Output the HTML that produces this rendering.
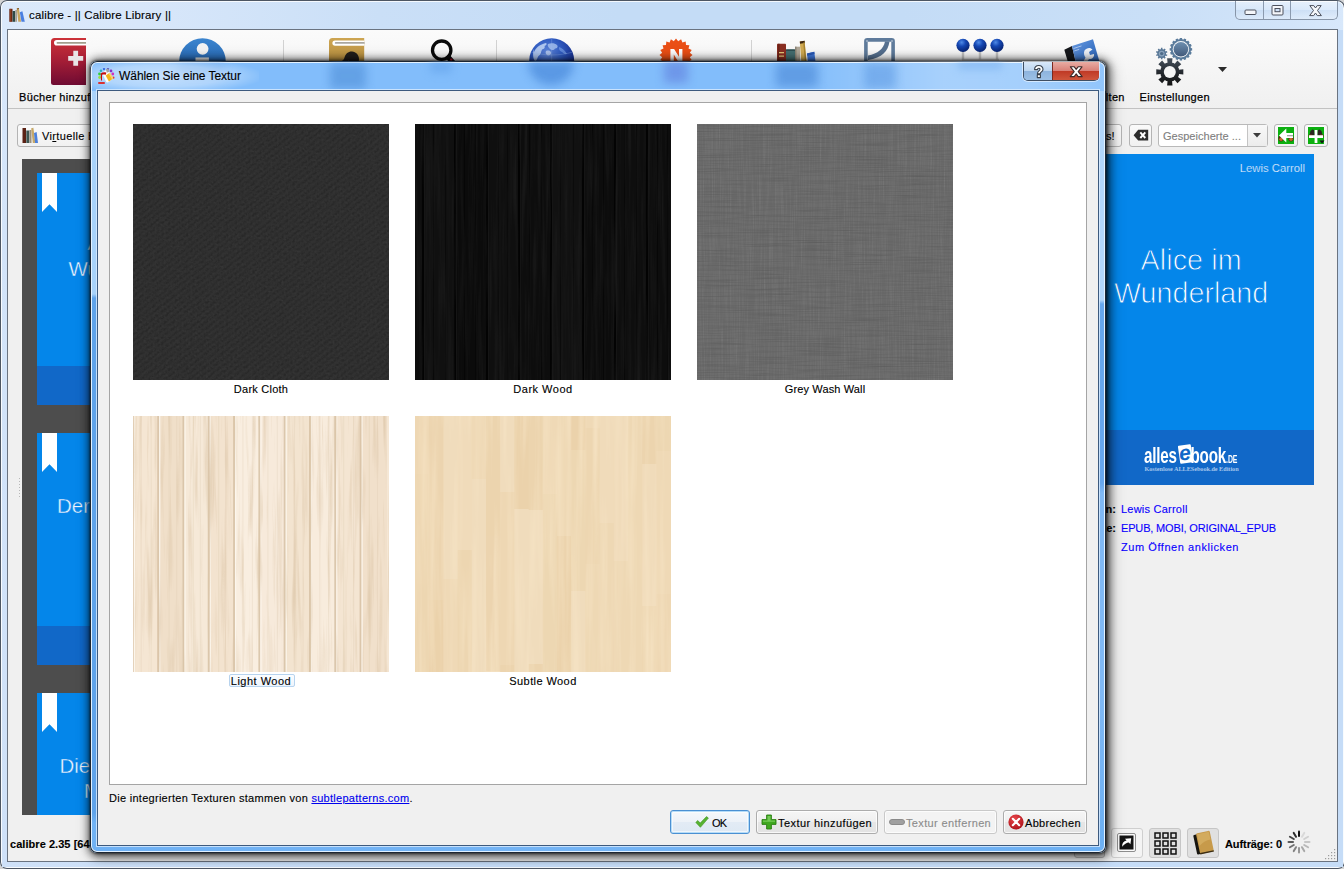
<!DOCTYPE html>
<html lang="de">
<head>
<meta charset="utf-8">
<title>calibre - Wählen Sie eine Textur</title>
<style>
*{box-sizing:border-box;margin:0;padding:0}
html,body{width:1344px;height:869px;overflow:hidden;background:#d4d4d4}
body{font-family:"Liberation Sans",sans-serif;font-size:11px;color:#000;position:relative}
.abs{position:absolute}
.t{position:absolute;white-space:nowrap;line-height:14px;-webkit-text-stroke-width:.12px}
.lbl,.dbtn span{-webkit-text-stroke-width:.12px}

/* ---------- main window ---------- */
#mw{position:absolute;left:0;top:0;width:1345px;height:869px;border-radius:7px 8px 7px 7px;
 background:linear-gradient(90deg,#dbe9fb 0,#d8e7fa 140px,#cadff7 380px,#c4dcf6 620px,#c4dcf6 900px,#c9dff7 1150px,#d2e4f9 1290px,#d8e8fb 1344px);
 box-shadow:inset 0 0 0 1px #4d5663, inset 0 0 0 2px rgba(255,255,255,.8)}
#mw-client{position:absolute;left:8px;top:30px;width:1329px;height:831px;background:#f0f0f0;
 box-shadow:0 0 0 1px #6a7380}
#mw-title{left:29px;top:8px;font-size:11.500px;letter-spacing:.16px}
#capbtn{position:absolute;left:1235px;top:1px;width:103px;height:19px;border:1px solid #8795a8;border-top:none;
 border-radius:0 0 5px 5px;background:linear-gradient(180deg,rgba(255,255,255,.45),rgba(255,255,255,.15) 50%,rgba(190,210,235,.3) 51%,rgba(255,255,255,.25));}
#capbtn i{position:absolute;top:0;width:1px;height:18px;background:#8b9aae}

#tb{position:absolute;left:0;top:0;width:1329px;height:78px;background:linear-gradient(180deg,#fbfbfb,#f3f3f3 70%,#f0f0f0)}
#tb-line{position:absolute;left:0;top:78px;width:1329px;height:1px;background:#c2c2c2}
.tbl{position:absolute;top:60px;font-size:11px;letter-spacing:.34px;line-height:14px;white-space:nowrap;color:#000}
.sep{position:absolute;top:10px;width:1px;height:60px;background:#d2d2d2}

.btn{position:absolute;border:1px solid #b4b4b4;border-radius:3px;background:linear-gradient(180deg,#f6f6f6,#ececec 50%,#e2e2e2 51%,#dedede)}
.btn.flat{background:linear-gradient(180deg,#fafafa,#f1f1f1)}

/* ---------- dialog ---------- */
#dlg-shadow{position:absolute;left:90px;top:61px;width:1016px;height:792px;border-radius:7px;
 box-shadow:0 0 2px 0 rgba(0,0,0,.55),0 0 9px 2px rgba(0,0,0,.33),1px 0 3px 1px rgba(0,0,0,.4),2px 2px 9px 2px rgba(0,0,0,.4),3px 2px 15px 3px rgba(0,0,0,.2)}
#dlg{position:absolute;left:90px;top:61px;width:1016px;height:792px;border-radius:7px;overflow:hidden;
 background:linear-gradient(180deg,#82bdfb 0,#82bdfb 560px,#6fb1f4 760px);
 box-shadow:inset 0 0 0 1px #1c2633, inset 0 0 0 2px rgba(236,246,255,.92)}
#dlg-client{position:absolute;left:8px;top:30px;width:1000px;height:754px;background:#f0f0f0;box-shadow:0 0 0 1px #3d5a7e, 0 0 0 2px rgba(214,234,254,.85)}
#list{position:absolute;left:11px;top:11px;width:978px;height:683px;background:#fff;border:1px solid #a5a5a5}
.th{position:absolute;width:256px;height:256px}
.lbl{position:absolute;width:256px;text-align:center;font-size:11px;line-height:14px;white-space:nowrap}
.dbtn{position:absolute;top:719px;height:24px;border:1px solid #acacac;border-radius:3px;
 background:linear-gradient(180deg,#f6f6f6,#efefef 48%,#e6e6e6 52%,#e3e3e3);box-shadow:inset 0 0 0 1px rgba(255,255,255,.75)}
.dbtn span{position:absolute;top:5px;font-size:11px;line-height:14px;white-space:nowrap}

.cv{position:absolute;left:15px;width:190px;height:232px;background:#0486ea}
.cv b{position:absolute;left:0;bottom:0;width:100%;height:39px;background:#1168c8}
.cv s{position:absolute;left:5px;top:0;width:15px;height:39px;background:#fff;clip-path:polygon(0 0,100% 0,100% 100%,50% 80%,0 100%)}
.cvt{color:#f2f8fe;font-size:20.500px;line-height:24px}
#dcap{left:933px;top:1px;width:76px;height:19px;border:1px solid #3f4f64;border-top:none;border-radius:0 0 5px 5px;box-shadow:0 0 0 1px rgba(255,255,255,.55)}
.thin{-webkit-text-stroke:.9px #0486ea}
.cvt{-webkit-text-stroke:.4px #0486ea}
.tbl,.semi{-webkit-text-stroke:.25px #000}
</style>
</head>
<body>

<!-- ================= MAIN WINDOW ================= -->
<div id="mw">
  <div class="t" id="mw-title">calibre - || Calibre Library ||</div>
  <svg class="abs" style="left:9px;top:7px" width="16" height="16" viewBox="0 0 16 16">
    <rect x=".3" y="1.800" width="3.200" height="13" fill="#6b2410"/><rect x="1.200" y="1.800" width="1" height="13" fill="#a5522a" opacity=".7"/>
    <rect x="3.600" y="4" width="2.600" height="10.800" fill="#2f4a47"/>
    <rect x="6.300" y="3" width="1.700" height="11.800" fill="#a8a093"/>
    <path d="M7.800 1.500l2-.6 2.300 13.900H9.300z" fill="#c9a55c"/><path d="M7.800 1.500l2-.6.2 1.200-2 .5z" fill="#7a4a1c"/>
    <path d="M10.800 5.200l2.600-.9 2.400 10.500h-3.300z" fill="#4a7fe0"/>
  </svg>
  <div id="capbtn"><i style="left:27px"></i><i style="left:54px"></i>
    <svg class="abs" style="left:0;top:0" width="102" height="19" viewBox="0 0 102 19">
      <rect x="9" y="9" width="11" height="4.500" rx="1" fill="#f4f6fa" stroke="#4c505c" stroke-width="1"/>
      <rect x="36" y="4.500" width="11" height="9.500" rx="1" fill="#f4f6fa" stroke="#4c505c" stroke-width="1"/>
      <rect x="39" y="7.500" width="5" height="3.200" fill="#cfe0f6" stroke="#4c505c" stroke-width="1"/>
      <path d="M73.800 4.600h4l1.700 2.400 1.700-2.400h4l-3.700 4.900 3.900 5.100h-4.100l-1.800-2.600-1.800 2.600h-4.100l3.900-5.100z" fill="#f6f8fb" stroke="#4c505c" stroke-width="1" stroke-linejoin="round"/>
    </svg>
  </div>

  <div class="abs" style="left:2px;top:30px;width:5px;height:832px;background:linear-gradient(180deg,#d9e8fb,#d3e4f9 200px,#cfe1f8)"></div>
  <div class="abs" style="left:1338px;top:30px;width:5px;height:832px;background:#c5dcf7"></div>
  <div class="abs" style="left:2px;top:862px;width:1341px;height:5px;background:linear-gradient(90deg,#cfe1f8,#c6ddf8 30%,#c6ddf8)"></div>
  <div id="mw-client">

    <div id="tb"></div>
    <div id="tb-line"></div>

    <!-- toolbar icons (coords relative to client: page x-8, y-30) -->
    <!-- 1 red book (cut at page x=86) -->
    <svg class="abs" style="left:43px;top:8px" width="35" height="48" viewBox="0 0 35 48">
      <defs><linearGradient id="gR" x1="0" y1="0" x2="0" y2="1"><stop offset="0" stop-color="#cc3238"/><stop offset=".45" stop-color="#a81f36"/><stop offset="1" stop-color="#6f0b33"/></linearGradient></defs>
      <path d="M3.5 0H35V47H2.5A2.5 2.5 0 0 1 0 44.5V3.5A3.5 3.5 0 0 1 3.5 0Z" fill="url(#gR)"/>
      <path d="M5.8 2H35V7.6H5.8A2.8 2.8 0 0 1 5.8 2Z" fill="#fff"/>
      <rect x="5.6" y="3.9" width="30" height="1.9" rx=".9" fill="#a39e8d"/>
      <path d="M22.3 12.8h4.8v5.1h5.1v4.8h-5.1v5.1h-4.8v-5.1h-5.1v-4.8h5.1z" fill="#e9e4e6"/>
    </svg>
    <div class="tbl" style="left:11px;top:60px">Bücher hinzufügen</div>

    <!-- 2 info circle -->
    <svg class="abs" style="left:171px;top:8px" width="47" height="47" viewBox="0 0 47 47">
      <defs><linearGradient id="gI" x1="0" y1="0" x2="0" y2="1"><stop offset="0" stop-color="#3b85cf"/><stop offset="1" stop-color="#164f9c"/></linearGradient></defs>
      <circle cx="23.5" cy="23.5" r="23.3" fill="url(#gI)"/>
      <circle cx="23.6" cy="10.8" r="5.9" fill="#f3f3f3"/>
      <path d="M16.5 19.6h13.4v18h3.2v3.6H14.2v-3.6h3.4v-14.4h-1.1z" fill="#ededed"/>
    </svg>

    <div class="sep" style="left:275px"></div>

    <!-- 3 brown book -->
    <svg class="abs" style="left:321px;top:8px" width="36" height="48" viewBox="0 0 36 48">
      <defs><linearGradient id="gB" x1="0" y1="0" x2="0" y2="1"><stop offset="0" stop-color="#cda552"/><stop offset="1" stop-color="#a47a2c"/></linearGradient></defs>
      <path d="M3.500 0H35.200V47H2.500A2.500 2.500 0 0 1 0 44.500V3.500A3.500 3.500 0 0 1 3.500 0Z" fill="url(#gB)"/>
      <path d="M6 2.500H35.200V7.700H6A2.600 2.600 0 0 1 6 2.500Z" fill="#fff"/>
      <rect x="5.800" y="4" width="30" height="1.800" rx=".9" fill="#aaa79f"/>
      <path d="M12.500 23c1.500-.5 2.500-1.500 3-3.500 1-4 4-6.200 7.500-6 4 .3 7 3.500 7 7.500 0 2-.6 3.500-1.500 5H17c2-.8 3-2.200 2.600-3.500-1.500 1.300-4.500 1.500-7.100.5z" fill="#231f1b"/>
    </svg>

    <!-- 4 magnifier -->
    <svg class="abs" style="left:420px;top:8px" width="40" height="48" viewBox="0 0 40 48">
      <circle cx="13.700" cy="12.200" r="9.200" fill="none" stroke="#0b0b0b" stroke-width="3.300"/>
      <path d="M20.500 19.500l8 9" stroke="#0b0b0b" stroke-width="5" stroke-linecap="round"/>
      <circle cx="23.200" cy="21.600" r="1.200" fill="#c4122a"/>
    </svg>

    <div class="sep" style="left:488px"></div>

    <!-- 5 globe -->
    <svg class="abs" style="left:521px;top:8px" width="46" height="46" viewBox="0 0 46 46">
      <defs><radialGradient id="gG" cx=".4" cy=".32" r=".72"><stop offset="0" stop-color="#5f86d8"/><stop offset=".45" stop-color="#2f5ac0"/><stop offset=".8" stop-color="#1b3596"/><stop offset="1" stop-color="#101f66"/></radialGradient>
      <clipPath id="cG"><circle cx="22.700" cy="22.700" r="22"/></clipPath></defs>
      <circle cx="22.700" cy="22.700" r="22.500" fill="url(#gG)"/>
      <g clip-path="url(#cG)">
        <path d="M5 14c2-5 7-8 12-9 1.500 1 0 2.500-1.500 3 1 1.500-.5 3-2.500 3.500-1 2.500-1 5-3.500 6.500-1.500 2-1.500 5-3.500 5-2-2-2.500-8-1-12z" fill="#c9dcf7" opacity=".8"/>
        <path d="M19 6c3-1.500 7-1 9 1 1.500 2 0 3.500-2 3.500-1 2-3.500 2-5 .5-1.500-1.500-3-3.500-2-5z" fill="#b7cff3" opacity=".7"/>
        <path d="M17 13c2-1 4.500-.5 5 1.500.5 2-1.500 3-3 3-2-.5-3-3-2-4.500z" fill="#d5e4fa" opacity=".65"/>
        <path d="M30 9c3 1 6 3.500 8 7-2 .5-3.500-.5-5-2-2-.5-3.500-2.500-3-5z" fill="#7fa5ea" opacity=".6"/>
        <path d="M22.700 0v46M2 14c14 4 28 4 42 0" stroke="#9dbbf0" stroke-width=".6" fill="none" opacity=".5"/>
      </g>
    </svg>

    <!-- 6 news badge -->
    <svg class="abs" style="left:651px;top:8px" width="34" height="34" viewBox="-17 -17 34 34">
      <path id="star" fill="#ea4f16" d="M0-16.5 2.2-13.8 5.1-15.7 6.4-12.5 9.7-13.4 10-9.9 13.4-9.7 12.5-6.4 15.7-5.1 13.8-2.2 16.5 0 13.8 2.2 15.7 5.1 12.5 6.4 13.4 9.7 10 10 9.7 13.4 6.4 12.5 5.1 15.7 2.2 13.8 0 16.5-2.2 13.8-5.1 15.7-6.4 12.5-9.7 13.4-10 10-13.4 9.7-12.500 6.4-15.7 5.1-13.8 2.2-16.5 0-13.8-2.2-15.7-5.1-12.5-6.4-13.4-9.700-10-10-9.700-13.400-6.400-12.500-5.100-15.700-2.200-13.800Z"/>
      <path d="M-5.600 7.500V-6h3.700L3 1.800V-6h3.400V7.500H2.800L-2.200-.4v7.900z" fill="#fff"/>
    </svg>

    <div class="sep" style="left:743px"></div>

    <!-- 7 books -->
    <svg class="abs" style="left:768px;top:10px" width="48" height="46" viewBox="0 0 48 46">
      <!-- page coords minus (776,40) -->
      <rect x="1" y="3.700" width="9" height="42" rx=".8" fill="#8a2f22"/><rect x="1.800" y="3.700" width="1.800" height="42" fill="#5b1a12" opacity=".6"/>
      <rect x="3" y="12" width="5" height="1.300" fill="#e3c878"/><rect x="3" y="15.500" width="5" height="1.300" fill="#e3c878"/>
      <rect x="10" y="9.400" width="9" height="36" rx=".8" fill="#456f71"/><rect x="10" y="9.400" width="9" height="1.500" fill="#2c4b4d"/>
      <rect x="19" y="6.700" width="5" height="39" fill="#b1a899"/><rect x="19" y="6.700" width="1.500" height="39" fill="#8d8577"/>
      <path d="M23.800 1.600l4.800-.9 4 44h-5.600z" fill="#d0aa52"/><path d="M23.800 1.600l4.800-.9.200 2.200-4.800.9z" fill="#3a2411"/><path d="M27.200 2.500l1.400-.3 4 43h-1.500z" fill="#a8842f"/>
      <path d="M31 13.500l7.300-1.800 4 33h-8z" fill="#3f78dc"/><path d="M31 13.500l7.300-1.800.3 2.300-7.300 1.800z" fill="#2a58b4"/>
    </svg>

    <!-- 8 reader/tweak icon -->
    <svg class="abs" style="left:856px;top:8px" width="32" height="46" viewBox="0 0 32 46">
      <rect x="1.900" y="1.900" width="27.200" height="34" rx="1.500" fill="#fafafa" stroke="#5f7b9b" stroke-width="3.600"/>
      <path d="M25.500 3.500c-1.500 10-7 16-21.500 18.500v-4.500c10-2 15.500-6.500 17-14z" fill="#56708f"/>
      <circle cx="3" cy="3" r=".7" fill="#e8eef5"/><circle cx="28" cy="3" r=".7" fill="#e8eef5"/>
    </svg>

    <!-- 9 pins -->
    <svg class="abs" style="left:944px;top:6px" width="60" height="30" viewBox="0 0 60 30">
      <defs><radialGradient id="gP" cx=".4" cy=".28" r=".75"><stop offset="0" stop-color="#4f8ae6"/><stop offset=".4" stop-color="#1548b4"/><stop offset="1" stop-color="#07216e"/></radialGradient></defs>
      <path d="M10 23.600h37" stroke="#d2d2d2" stroke-width="1.600"/>
      <path d="M11 14v10M28 14v10M45 14v10" stroke="#c4c4c4" stroke-width="2.400"/>
      <circle cx="11" cy="9.300" r="6.600" fill="url(#gP)"/><circle cx="28" cy="9.300" r="6.600" fill="url(#gP)"/><circle cx="45" cy="9.300" r="6.600" fill="url(#gP)"/>
    </svg>

    <!-- 10 blue book w/ wrench -->
    <svg class="abs" style="left:1052px;top:6px" width="46" height="40" viewBox="0 0 46 40">
      <!-- page coords minus (1060,36) -->
      <defs><linearGradient id="gBB" x1="0" y1="0" x2="1" y2="1"><stop offset="0" stop-color="#6a9be0"/><stop offset=".5" stop-color="#3f77c8"/><stop offset="1" stop-color="#2a5aa8"/></linearGradient></defs>
      <path d="M4.300 13.800l7.700-3.800 6 26-6.500 2z" fill="#16181c"/>
      <path d="M12 10l21-6.800 7.500 26-22.500 6.800z" fill="url(#gBB)"/>
      <path d="M13.500 12.500l8-2.600M14.200 15l5-1.600" stroke="#a9c6f0" stroke-width="1"/>
      <path d="M24.500 14.500c2-3 6-3.500 8-1l-3.500 2.500 1 3 4-1c.5 3-2 5.500-5 5l-4 6-3-1 3.500-6.500c-1.500-2-2-4.500-1-7z" fill="#eef2f8"/>
    </svg>
    <div class="tbl" style="right:212.200px;top:60px">Bücher verwalten</div>

    <!-- 11 gears -->
    <svg class="abs" style="left:1144px;top:6px" width="56" height="52" viewBox="0 0 56 52">
      <defs><linearGradient id="gGr" x1="0" y1="0" x2="0" y2="1"><stop offset="0" stop-color="#6d8fb0"/><stop offset="1" stop-color="#41597a"/></linearGradient>
      <linearGradient id="gBig" gradientUnits="userSpaceOnUse" x1="0" y1="-14" x2="0" y2="14"><stop offset="0" stop-color="#47525e"/><stop offset=".55" stop-color="#23272c"/><stop offset="1" stop-color="#141414"/></linearGradient></defs>
      <g transform="translate(28.900 13.300)"><path d="M-1.39 -9.80 L-1.11 -11.25 L1.11 -11.25 L1.39 -9.80 L2.46 -9.59 L3.28 -10.81 L5.33 -9.97 L5.04 -8.52 L5.94 -7.92 L7.17 -8.74 L8.74 -7.17 L7.92 -5.94 L8.52 -5.04 L9.97 -5.33 L10.81 -3.28 L9.59 -2.46 L9.80 -1.39 L11.25 -1.11 L11.25 1.11 L9.80 1.39 L9.59 2.46 L10.81 3.28 L9.97 5.33 L8.52 5.04 L7.92 5.94 L8.74 7.17 L7.17 8.74 L5.94 7.92 L5.04 8.52 L5.33 9.97 L3.28 10.81 L2.46 9.59 L1.39 9.80 L1.11 11.25 L-1.11 11.25 L-1.39 9.80 L-2.46 9.59 L-3.28 10.81 L-5.33 9.97 L-5.04 8.52 L-5.94 7.92 L-7.17 8.74 L-8.74 7.17 L-7.92 5.94 L-8.52 5.04 L-9.97 5.33 L-10.81 3.28 L-9.59 2.46 L-9.80 1.39 L-11.25 1.11 L-11.25 -1.11 L-9.80 -1.39 L-9.59 -2.46 L-10.81 -3.28 L-9.97 -5.33 L-8.52 -5.04 L-7.92 -5.94 L-8.74 -7.17 L-7.17 -8.74 L-5.94 -7.92 L-5.04 -8.52 L-5.33 -9.97 L-3.28 -10.81 L-2.46 -9.59Z" fill="#5b7c9c"/><circle r="10" fill="#5b7c9c"/><circle r="8.200" fill="#f6f8fa"/><circle r="7.300" fill="url(#gGr)"/></g>
      <g transform="translate(9.700 17.600)"><path d="M-0.79 -4.13 L-0.76 -5.75 L0.76 -5.75 L0.79 -4.13 L1.79 -3.80 L2.76 -5.10 L4.00 -4.20 L3.06 -2.88 L3.68 -2.02 L5.23 -2.50 L5.70 -1.05 L4.17 -0.53 L4.17 0.53 L5.70 1.05 L5.23 2.50 L3.68 2.02 L3.06 2.88 L4.00 4.20 L2.76 5.10 L1.79 3.80 L0.79 4.13 L0.76 5.75 L-0.76 5.75 L-0.79 4.13 L-1.79 3.80 L-2.76 5.10 L-4.00 4.20 L-3.06 2.88 L-3.68 2.02 L-5.23 2.50 L-5.70 1.05 L-4.17 0.53 L-4.17 -0.53 L-5.70 -1.05 L-5.23 -2.50 L-3.68 -2.02 L-3.06 -2.88 L-4.00 -4.20 L-2.76 -5.10 L-1.79 -3.80Z" fill="#5a7897"/><circle r="4.300" fill="#5a7897"/><circle r="2.900" fill="#8aa3bd"/><circle r="1.700" fill="#4f6c8a"/></g>
      <g transform="translate(17.800 35.900)"><path d="M-2.22 -8.93 L-2.69 -13.53 L2.69 -13.53 L2.22 -8.93 L4.75 -7.88 L7.67 -11.47 L11.47 -7.67 L7.88 -4.75 L8.93 -2.22 L13.53 -2.69 L13.53 2.69 L8.93 2.22 L7.88 4.75 L11.47 7.67 L7.67 11.47 L4.75 7.88 L2.22 8.93 L2.69 13.53 L-2.69 13.53 L-2.22 8.93 L-4.75 7.88 L-7.67 11.47 L-11.47 7.67 L-7.88 4.75 L-8.93 2.22 L-13.53 2.69 L-13.53 -2.69 L-8.93 -2.22 L-7.88 -4.75 L-11.47 -7.67 L-7.67 -11.47 L-4.75 -7.88Z" fill="url(#gBig)"/><path d="M9.600 0A9.600 9.600 0 1 0 -9.600 0A9.600 9.600 0 1 0 9.600 0Z" fill="url(#gBig)"/><circle r="6" fill="#f5f5f5"/></g>
    </svg>
    <div class="tbl" style="left:1131.500px;top:60px;letter-spacing:.34px">Einstellungen</div>
    <svg class="abs" style="left:1210px;top:37px" width="9" height="5" viewBox="0 0 9 5"><path d="M0 0h9L4.500 5z" fill="#2b2b2b"/></svg>

    <!-- search row -->
    <div class="btn flat" style="left:9px;top:94px;width:140px;height:23px"></div>
    <svg class="abs" style="left:14px;top:97px" width="16" height="17" viewBox="0 0 16 17">
      <rect x=".5" y="1" width="3.500" height="15" fill="#5a2114"/><rect x="4.300" y="3.500" width="3" height="12.500" fill="#3c5551"/><rect x="7.500" y="3" width="2" height="13" fill="#9a9080"/>
      <path d="M9.200 1.200l2.200-.5 1.900 15.300h-2.500z" fill="#c6a869"/><path d="M12 6l2.600-.9 1.400 10.900h-2.900z" fill="#4c80dc"/>
    </svg>
    <div class="t" style="left:34px;top:99px;letter-spacing:.35px">Vi<u>r</u>tuelle Bibliothek</div>

    <div class="btn flat" style="left:1060px;top:94px;width:54px;height:23px"></div>
    <div class="t" style="left:1098px;top:99px">s!</div>
    <div class="btn flat" style="left:1121px;top:94px;width:23px;height:23px"></div>
    <svg class="abs" style="left:1125px;top:99px" width="16" height="13" viewBox="0 0 16 13"><path d="M5.200.8H15.200V11.600H5.200L.6 6.200z" fill="#2d2d2d"/><path d="M7.300 3.400l5 5.600M12.300 3.400l-5 5.600" stroke="#fff" stroke-width="1.900"/></svg>
    <div class="abs" style="left:1150px;top:94px;width:110px;height:23px;border:1px solid #b9b9b9;border-radius:3px;background:#fff"></div>
    <div class="abs" style="left:1239px;top:95px;width:20px;height:21px;border-left:1px solid #c4c4c4;background:linear-gradient(180deg,#f8f8f8,#ececec)"></div>
    <div class="t" style="left:1155px;top:99px;color:#808080;letter-spacing:.02px">Gespeicherte ...</div>
    <svg class="abs" style="left:1245px;top:103px" width="8" height="5" viewBox="0 0 8 5"><path d="M0 0h8L4 4.600z" fill="#3c3c3c"/></svg>
    <div class="btn flat" style="left:1266px;top:94px;width:24px;height:23px"></div>
    <svg class="abs" style="left:1270px;top:97px" width="16" height="17" viewBox="0 0 16 17"><rect width="16" height="17" fill="#0cb010"/><ellipse cx="3" cy="11.500" rx="2.600" ry="3" fill="#5a2a14"/><ellipse cx="13" cy="11.500" rx="2.600" ry="3" fill="#5a2a14"/><ellipse cx="3" cy="12.300" rx="1.700" ry="1.800" fill="#c46a2c"/><ellipse cx="13" cy="12.300" rx="1.700" ry="1.800" fill="#c46a2c"/><path d="M1 8.500L8.300 1.500v4.600H15v4.800H8.300v4.600z" fill="#fff"/><path d="M9 8h6v1.300H9z" fill="#5b5b5b" opacity=".55"/></svg>
    <div class="btn flat" style="left:1296px;top:94px;width:24px;height:23px"></div>
    <svg class="abs" style="left:1300px;top:97px" width="17" height="17" viewBox="0 0 17 17"><rect width="16" height="17" fill="#0cb010"/><path d="M1.500 8.500l1-4.500 2-1.500 1.500.5 1 5.500zM14.500 8.500l-1-4.500-2-1.500-1.500.5-1 5.500z" fill="#2a2420"/><ellipse cx="2.600" cy="9" rx="2.300" ry="1.800" fill="#6a3418"/><ellipse cx="13.400" cy="9" rx="2.300" ry="1.800" fill="#6a3418"/><path d="M6.600 3h2.800v5.200H15v2.800H9.400V16H6.600v-5H1V8.200h5.600z" fill="#fff"/><path d="M11.500 13.500h5l-2.500 3z" fill="#111"/></svg>

    <!-- left cover grid -->
    <div class="abs" style="left:14px;top:129px;width:200px;height:656px;background:#4d4d4d;overflow:hidden">
      <div class="cv" style="top:14px"><b></b><s></s><div class="t cvt" style="left:50.500px;top:58px">Alice im</div><div class="t cvt" style="left:31.500px;top:84px">Wunderland</div></div>
      <div class="cv" style="top:274px"><b></b><s></s><div class="t cvt" style="left:20px;top:60.500px">Der</div></div>
      <div class="cv" style="top:534px"><b></b><s></s><div class="t cvt" style="left:22.500px;top:60.500px">Die</div><div class="t cvt" style="left:47px;top:86px">Maske</div></div>
    </div>
    <!-- splitter dots -->
    <div class="abs" style="left:11px;top:448px;width:1px;height:20px;background:repeating-linear-gradient(180deg,#b8b8b8 0 1px,transparent 1px 3px)"></div>

    <!-- right cover -->
    <div class="abs" style="left:1060px;top:124px;width:246px;height:331px;background:#0486ea">
      <div class="abs" style="left:0;top:276px;width:246px;height:55px;background:#1168c8"></div>
      <div class="t" style="right:9px;top:6.500px;color:#e4f0fc;font-size:11.300px;letter-spacing:0;-webkit-text-stroke:.2px #0486ea">Lewis Carroll</div>
      <div class="t thin" style="left:72.500px;top:89.700px;color:#fff;font-size:28.700px;line-height:32px;letter-spacing:.1px" id="al1">Alice im</div>
      <div class="t thin" style="left:46px;top:123.200px;color:#fff;font-size:28.700px;line-height:32px" id="al2">Wunderland</div>
      <div id="logo" class="abs" style="left:76px;top:290px;width:100px;height:34px">
        <div class="abs" style="left:0;top:0;transform-origin:0 0;transform:scaleX(.69);white-space:nowrap;font-weight:bold;font-size:22px;line-height:24px;color:#fff;letter-spacing:-.3px">alles<span style="display:inline-block;width:20px"></span>book<span style="font-size:10px;letter-spacing:0">.DE</span></div>
        <div class="abs" style="left:34.500px;top:1px;width:13px;height:18px;background:#fff;transform:rotate(-8deg);border-radius:1px"></div>
        <div class="abs" style="left:35px;top:-3px;font-size:21px;line-height:24px;font-style:italic;font-weight:bold;color:#1168c8;transform:rotate(-8deg)">e</div>
        <div class="abs" style="left:.500px;top:21px;white-space:nowrap;font-family:'Liberation Serif',serif;font-weight:bold;font-size:6.200px;line-height:8px;color:#a6c6ec;letter-spacing:-.02px">Kostenlose ALLESebook.de Edition</div>
      </div>
    </div>
    <div class="t" style="right:221px;top:472px;font-weight:bold">Autoren:</div><div class="t" style="right:221px;top:491px;font-weight:bold">Formate:</div>
    <div class="t" style="left:1113px;top:472px;color:#0b00ff;letter-spacing:.23px">Lewis Carroll</div>
    <div class="t" style="left:1113px;top:491px;color:#0b00ff;letter-spacing:-.16px">EPUB, MOBI, ORIGINAL_EPUB</div>
    <div class="t" style="left:1113px;top:510px;color:#0b00ff;letter-spacing:.56px">Zum Öffnen anklicken</div>

    <!-- status bar -->
    <div class="t" style="left:2px;top:807px;font-weight:bold;letter-spacing:.05px">calibre 2.35 [64bit]</div>
    <div class="btn" style="left:1066px;top:798px;width:31px;height:30px;background:#e1e1e1"></div>
    <div class="btn" style="left:1103px;top:798px;width:32px;height:30px;background:#f4f4f4;border-color:#cfcfcf"></div>
    <svg class="abs" style="left:1109px;top:803px" width="19" height="19" viewBox="0 0 19 19"><rect x=".5" y=".5" width="18" height="18" rx="1.500" fill="#fafafa" stroke="#8e8e8e"/><rect x="2.500" y="2.500" width="14" height="14" fill="#141414"/><path d="M5.200 13.800c-.3-3.600 1.400-5.700 4.300-6.200L8 5.800l6.200-.6-.8 6-1.500-1.700c-2.400.2-4.600 1.500-6.700 4.300z" fill="#fff"/></svg>
    <div class="btn" style="left:1141px;top:798px;width:32px;height:30px;background:#e0e0e0;border-color:#c6c6c6"></div>
    <svg class="abs" style="left:1146px;top:802px" width="23" height="23" viewBox="0 0 23 23"><g fill="none" stroke="#111" stroke-width="1.500"><rect x="1" y="1" width="5" height="5"/><rect x="9" y="1" width="5" height="5"/><rect x="17" y="1" width="5" height="5"/><rect x="1" y="9" width="5" height="5"/><rect x="9" y="9" width="5" height="5"/><rect x="17" y="9" width="5" height="5"/><rect x="1" y="17" width="5" height="5"/><rect x="9" y="17" width="5" height="5"/><rect x="17" y="17" width="5" height="5"/></g></svg>
    <div class="btn" style="left:1179px;top:798px;width:32px;height:30px;background:#e0e0e0;border-color:#c6c6c6"></div>
    <svg class="abs" style="left:1183px;top:800px" width="26" height="26" viewBox="0 0 26 26"><g transform="rotate(-12 13 13)"><rect x="4" y="3" width="5" height="20" rx="1" fill="#17150f"/><rect x="7" y="2" width="14" height="21" rx="1.500" fill="#c79a4a"/><path d="M8 3h12v8c-4 0-8 1-12 4z" fill="#d9b266" opacity=".7"/><rect x="7" y="22" width="14" height="1.500" fill="#3b2d13"/></g></svg>
    <div class="t" style="left:1217px;top:807px;font-weight:bold;letter-spacing:-.09px">Aufträge: 0</div>
    <svg class="abs" style="left:1279px;top:800px" width="24" height="24" viewBox="-12 -12 24 24" id="spin"><rect x="-1" y="-11.500" width="2" height="6.500" rx="1" fill="#111" transform="rotate(0)"/><rect x="-1" y="-11.500" width="2" height="6.500" rx="1" fill="#d9d9d9" transform="rotate(30)"/><rect x="-1" y="-11.500" width="2" height="6.500" rx="1" fill="#d0d0d0" transform="rotate(60)"/><rect x="-1" y="-11.500" width="2" height="6.500" rx="1" fill="#c6c6c6" transform="rotate(90)"/><rect x="-1" y="-11.500" width="2" height="6.500" rx="1" fill="#b8b8b8" transform="rotate(120)"/><rect x="-1" y="-11.500" width="2" height="6.500" rx="1" fill="#a8a8a8" transform="rotate(150)"/><rect x="-1" y="-11.500" width="2" height="6.500" rx="1" fill="#969696" transform="rotate(180)"/><rect x="-1" y="-11.500" width="2" height="6.500" rx="1" fill="#828282" transform="rotate(210)"/><rect x="-1" y="-11.500" width="2" height="6.500" rx="1" fill="#6e6e6e" transform="rotate(240)"/><rect x="-1" y="-11.500" width="2" height="6.500" rx="1" fill="#595959" transform="rotate(270)"/><rect x="-1" y="-11.500" width="2" height="6.500" rx="1" fill="#444" transform="rotate(300)"/><rect x="-1" y="-11.500" width="2" height="6.500" rx="1" fill="#2c2c2c" transform="rotate(330)"/></svg>
    <svg class="abs" style="left:1316px;top:818px" width="12" height="12" viewBox="0 0 12 12"><rect x="10" y="10" width="1.200" height="1.200" fill="#9c9c9c"/><rect x="7" y="10" width="1.200" height="1.200" fill="#9c9c9c"/><rect x="4" y="10" width="1.200" height="1.200" fill="#9c9c9c"/><rect x="1" y="10" width="1.200" height="1.200" fill="#9c9c9c"/><rect x="10" y="7" width="1.200" height="1.200" fill="#9c9c9c"/><rect x="7" y="7" width="1.200" height="1.200" fill="#9c9c9c"/><rect x="4" y="7" width="1.200" height="1.200" fill="#9c9c9c"/><rect x="10" y="4" width="1.200" height="1.200" fill="#9c9c9c"/><rect x="7" y="4" width="1.200" height="1.200" fill="#9c9c9c"/><rect x="10" y="1" width="1.200" height="1.200" fill="#9c9c9c"/></svg>
  </div>
</div>

<!-- ================= DIALOG ================= -->
<div id="dlg-shadow"></div>
<div id="dlg">
  <!-- glass: blurred backdrop blobs + glow -->
  <div class="abs" style="left:0;top:0;width:1016px;height:30px;overflow:hidden">
    <div class="abs" style="left:0;top:0;width:1016px;height:30px;background:linear-gradient(90deg,rgba(255,255,255,.0) 0,rgba(255,255,255,0) 70%,rgba(255,255,255,.3) 84%,rgba(255,255,255,.28) 92%,rgba(255,255,255,.12) 100%)"></div>
    <div class="abs" style="left:88px;top:2px;width:46px;height:14px;background:#5f9fe8;filter:blur(5px);opacity:.55"></div>
    <div class="abs" style="left:240px;top:2px;width:36px;height:26px;background:#4f8fd8;filter:blur(5px);opacity:.6"></div>
    <div class="abs" style="left:340px;top:0;width:22px;height:12px;background:#5f9fe8;filter:blur(4px);opacity:.5"></div>
    <div class="abs" style="left:438px;top:0px;width:46px;height:24px;border-radius:0 0 23px 23px;background:#4585d8;filter:blur(5px);opacity:.65"></div>
    <div class="abs" style="left:574px;top:0;width:24px;height:22px;background:#5a74d8;filter:blur(5px);opacity:.5"></div>
    <div class="abs" style="left:686px;top:2px;width:42px;height:24px;background:#4b88d6;filter:blur(5px);opacity:.6"></div>
    <div class="abs" style="left:774px;top:2px;width:32px;height:26px;background:#5b98e2;filter:blur(5px);opacity:.55"></div>
    <div class="abs" style="left:868px;top:0;width:44px;height:8px;background:#6aa6ea;filter:blur(4px);opacity:.5"></div>
    <div class="abs" style="left:-6px;top:-2px;width:175px;height:34px;background:radial-gradient(ellipse at 45% 50%,rgba(255,255,255,.55) 0,rgba(255,255,255,.38) 45%,rgba(255,255,255,0) 75%)"></div>
  </div>
  <svg class="abs" style="left:8px;top:7px" width="17" height="17" viewBox="0 0 17 17">
    <circle cx="1.500" cy="6" r="1.400" fill="#2fcf3d"/><circle cx="1.600" cy="9.500" r="1.400" fill="#9be23c"/><circle cx="3" cy="2.700" r="1.300" fill="#2bb2c4"/>
    <circle cx="6" cy="1" r="1.200" fill="#3b72e6"/><circle cx="10" cy="1" r="1.200" fill="#5a50c8"/><circle cx="13" cy="2.900" r="1.400" fill="#8a2fc8"/>
    <circle cx="14.800" cy="6" r="1.400" fill="#d030be"/><circle cx="15.400" cy="9.700" r="1.100" fill="#e03a3a"/>
    <path d="M4.200 5.200l4-3.200 3.200 2.200 3.800 6.200-5.400 4-1.600-.4z" fill="#fdfdfd"/>
    <path d="M7.900 1.200l2.600-.6.600 3.200-2.300 1z" fill="#a3a3a3"/>
    <path d="M7.600 7.600l4.200-2.900 3.400 5.700-4.300 3.100z" fill="#f2b61d"/><path d="M10.600 5.500l1.200-.8 3.400 5.700-1.200.9z" fill="#f8d370"/>
    <path d="M2.700 5.400c1.700-1.200 3.900-1.400 5.600-.7l-.5 2c-1.200-.4-2.500-.4-3.800 0v5.700H3z" fill="#c40d0d"/>
    <rect x="0" y="14" width="7" height="2" rx="1" fill="#d93232"/>
  </svg>
  <div class="abs" id="dcap">
    <div class="abs" style="left:0;top:0;width:28px;height:18px;background:linear-gradient(180deg,#d9e8f9 0,#bcd5f0 48%,#8eb4de 52%,#9cc0e6 100%);border-radius:0 0 0 4px"></div>
    <div class="abs" style="left:28px;top:0;width:47px;height:18px;background:linear-gradient(180deg,#e9aca3 0,#d98178 48%,#c03a26 52%,#cf563c 100%);border-radius:0 0 4px 0;box-shadow:inset 1px 0 0 #7a2a20"></div>
    <svg class="abs" style="left:0;top:0" width="75" height="19" viewBox="0 0 75 19">
      <path d="M10.600 7.600c0-5.300 8.400-5.300 8.400-.4 0 2.700-2.700 2.600-2.700 4.500h-2.900c0-3 2.600-3 2.600-4.500 0-1.300-2.500-1.300-2.500.4zM13.300 12.700h3.100v2.900h-3.100z" fill="#fff" stroke="#39414d" stroke-width="1.100" stroke-linejoin="round"/>
      <path d="M46.400 4.800h3.900l1.900 2.500 1.900-2.500H58l-3.800 4.800 4 5h-4l-2-2.700-2 2.700h-4l4-5z" fill="#fff" stroke="#3d2a2a" stroke-width="1.100" stroke-linejoin="round"/>
    </svg>
  </div>
  <div class="t" id="dlg-title" style="left:29px;top:8px;font-size:12px;letter-spacing:-.06px">Wählen Sie eine Textur</div>
  <!-- glass tint where blue covers lie behind the frame (page y = 61 + top) -->
  <div class="abs" style="left:2px;top:30px;width:5px;height:754px;background:linear-gradient(180deg,#a8d2f9 0,#a8d2f9 203px,#5fa3ea 207px,#5fa3ea 722px,#70b2f4 732px,#70b2f4 754px)"></div>
  <div class="abs" style="left:1009px;top:30px;width:5px;height:754px;background:linear-gradient(180deg,#b2d6fa 0,#b2d6fa 209px,#66a7ee 213px,#66a7ee 392px,#80b9f5 402px,#80b9f5 600px,#6db0f3 740px)"></div>
  <div class="abs" style="left:7px;top:786px;width:1002px;height:4px;background:linear-gradient(90deg,#6fb1f4,#74b4f5 50%,#6db0f3)"></div>
  <div id="dlg-client">

    <div id="list">
      <svg width="0" height="0" style="position:absolute">
        <defs>
          <filter id="fCloth" x="0" y="0" width="100%" height="100%" color-interpolation-filters="sRGB"><feTurbulence type="fractalNoise" baseFrequency=".45 .45" numOctaves="2" seed="3"/><feColorMatrix values="0 0 0 0 .21  0 0 0 0 .21  0 0 0 0 .21  .9 .9 .9 0 -1.05" result="n"/><feMerge><feMergeNode in="SourceGraphic"/><feMergeNode in="n"/></feMerge></filter>
          <filter id="fLinen" x="0" y="0" width="100%" height="100%" color-interpolation-filters="sRGB">
            <feTurbulence type="fractalNoise" baseFrequency=".8 .02" numOctaves="3" seed="5" result="a"/>
            <feColorMatrix in="a" values="0 0 0 0 .5  0 0 0 0 .5  0 0 0 0 .5  .6 .6 .6 0 -.8" result="a2"/>
            <feTurbulence type="fractalNoise" baseFrequency=".02 .8" numOctaves="3" seed="9" result="b"/>
            <feColorMatrix in="b" values="0 0 0 0 .34  0 0 0 0 .34  0 0 0 0 .34  .6 .6 .6 0 -.8" result="b2"/>
            <feMerge><feMergeNode in="SourceGraphic"/><feMergeNode in="a2"/><feMergeNode in="b2"/></feMerge>
          </filter>
          <filter id="fGrainD" x="0" y="0" width="100%" height="100%" color-interpolation-filters="sRGB"><feTurbulence type="fractalNoise" baseFrequency=".3 .01" numOctaves="3" seed="11"/><feColorMatrix values="0 0 0 0 .11  0 0 0 0 .11  0 0 0 0 .11  .9 .9 .9 0 -1.22" result="n"/><feMerge><feMergeNode in="SourceGraphic"/><feMergeNode in="n"/></feMerge></filter>
          <filter id="fGrainL" x="0" y="0" width="100%" height="100%" color-interpolation-filters="sRGB"><feTurbulence type="fractalNoise" baseFrequency=".2 .009" numOctaves="3" seed="4"/><feColorMatrix values="0 0 0 0 .86  0 0 0 0 .77  0 0 0 0 .65  .9 .9 .9 0 -1.32" result="n"/><feMerge><feMergeNode in="SourceGraphic"/><feMergeNode in="n"/></feMerge></filter>
          <filter id="fGrainS" x="0" y="0" width="100%" height="100%" color-interpolation-filters="sRGB"><feTurbulence type="fractalNoise" baseFrequency=".14 .006" numOctaves="3" seed="8"/><feColorMatrix values="0 0 0 0 .97  0 0 0 0 .9  0 0 0 0 .78  .8 .8 .8 0 -1.05" result="n"/><feMerge><feMergeNode in="SourceGraphic"/><feMergeNode in="n"/></feMerge></filter>
        </defs>
      </svg>
      <!-- list coords: page - (110,103) -->
      <svg class="th" style="left:23px;top:21px" viewBox="0 0 256 256"><defs><pattern id="pTw" width="5" height="5" patternUnits="userSpaceOnUse" patternTransform="rotate(-38)"><rect width="5" height="2" fill="#262626" opacity=".6"/><rect y="2.500" width="5" height="1.200" fill="#343434" opacity=".5"/></pattern></defs><g filter="url(#fCloth)"><rect width="256" height="256" fill="#2b2b2b"/><rect width="256" height="256" fill="url(#pTw)"/></g></svg>
      <svg class="th" style="left:305px;top:21px" viewBox="0 0 256 256"><g filter="url(#fGrainD)"><!--DW--><rect width="256" height="256" fill="#0e0e0e"/><rect x="-24" y="0" width="32" height="256" fill="#0d0d0d"/><rect x="-14" y="0" width="1" height="256" fill="#000" opacity="0.4"/><rect x="-4" y="0" width="1" height="256" fill="#000" opacity="0.35"/><rect x="-25" y="0" width="2" height="256" fill="#030303"/><rect x="-23" y="0" width="1" height="256" fill="#191919" opacity=".6"/><rect x="8" y="0" width="32" height="256" fill="#101010"/><rect x="18" y="0" width="1" height="256" fill="#000" opacity="0.4"/><rect x="30" y="0" width="1" height="256" fill="#000" opacity="0.35"/><rect x="7" y="0" width="2" height="256" fill="#030303"/><rect x="9" y="0" width="1" height="256" fill="#191919" opacity=".6"/><rect x="40" y="0" width="32" height="256" fill="#0b0b0b"/><rect x="49" y="0" width="1" height="256" fill="#000" opacity="0.4"/><rect x="60" y="0" width="1" height="256" fill="#000" opacity="0.35"/><rect x="39" y="0" width="2" height="256" fill="#030303"/><rect x="41" y="0" width="1" height="256" fill="#191919" opacity=".6"/><rect x="72" y="0" width="32" height="256" fill="#0f0f0f"/><rect x="83" y="0" width="1" height="256" fill="#000" opacity="0.4"/><rect x="92" y="0" width="1" height="256" fill="#000" opacity="0.35"/><rect x="71" y="0" width="2" height="256" fill="#030303"/><rect x="73" y="0" width="1" height="256" fill="#191919" opacity=".6"/><rect x="104" y="0" width="32" height="256" fill="#0d0d0d"/><rect x="114" y="0" width="1" height="256" fill="#000" opacity="0.4"/><rect x="126" y="0" width="1" height="256" fill="#000" opacity="0.35"/><rect x="103" y="0" width="2" height="256" fill="#030303"/><rect x="105" y="0" width="1" height="256" fill="#191919" opacity=".6"/><rect x="136" y="0" width="32" height="256" fill="#111111"/><rect x="145" y="0" width="1" height="256" fill="#000" opacity="0.4"/><rect x="158" y="0" width="1" height="256" fill="#000" opacity="0.35"/><rect x="135" y="0" width="2" height="256" fill="#030303"/><rect x="137" y="0" width="1" height="256" fill="#191919" opacity=".6"/><rect x="168" y="0" width="32" height="256" fill="#0c0c0c"/><rect x="177" y="0" width="1" height="256" fill="#000" opacity="0.4"/><rect x="188" y="0" width="1" height="256" fill="#000" opacity="0.35"/><rect x="167" y="0" width="2" height="256" fill="#030303"/><rect x="169" y="0" width="1" height="256" fill="#191919" opacity=".6"/><rect x="200" y="0" width="32" height="256" fill="#0e0e0e"/><rect x="209" y="0" width="1" height="256" fill="#000" opacity="0.4"/><rect x="221" y="0" width="1" height="256" fill="#000" opacity="0.35"/><rect x="199" y="0" width="2" height="256" fill="#030303"/><rect x="201" y="0" width="1" height="256" fill="#191919" opacity=".6"/><rect x="232" y="0" width="32" height="256" fill="#0d0d0d"/><rect x="242" y="0" width="1" height="256" fill="#000" opacity="0.4"/><rect x="252" y="0" width="1" height="256" fill="#000" opacity="0.35"/><rect x="231" y="0" width="2" height="256" fill="#030303"/><rect x="233" y="0" width="1" height="256" fill="#191919" opacity=".6"/><!--/DW--></g></svg>
      <svg class="th" style="left:587px;top:21px" viewBox="0 0 256 256"><g filter="url(#fLinen)"><rect width="256" height="256" fill="#6a6a6a"/></g></svg>
      <svg class="th" style="left:23px;top:313px" viewBox="0 0 256 256"><g filter="url(#fGrainL)"><!--LW--><rect width="256" height="256" fill="#f5e7d5"/><rect x="-24.8" y="0" width="25.8" height="256" fill="#f5e7d5"/><rect x="-17.1" y="0" width="1" height="256" fill="#d9c5aa" opacity="0.28"/><rect x="-7.6" y="0" width="1" height="256" fill="#d9c5aa" opacity="0.24"/><rect x="-26.4" y="0" width="2" height="256" fill="#d6c1a4" opacity=".85"/><rect x="-24.5" y="0" width="1.2" height="256" fill="#fdf7ee" opacity=".9"/><rect x="0.5" y="0" width="25.8" height="256" fill="#f5e6d3"/><rect x="7.7" y="0" width="1" height="256" fill="#d9c5aa" opacity="0.28"/><rect x="17.7" y="0" width="1" height="256" fill="#d9c5aa" opacity="0.24"/><rect x="-1.1" y="0" width="2" height="256" fill="#d6c1a4" opacity=".85"/><rect x="0.8" y="0" width="1.2" height="256" fill="#fdf7ee" opacity=".9"/><rect x="25.8" y="0" width="25.8" height="256" fill="#f0dfc9"/><rect x="35.6" y="0" width="1" height="256" fill="#d9c5aa" opacity="0.28"/><rect x="43.2" y="0" width="1" height="256" fill="#d9c5aa" opacity="0.24"/><rect x="24.2" y="0" width="2" height="256" fill="#d6c1a4" opacity=".85"/><rect x="26.1" y="0" width="1.2" height="256" fill="#fdf7ee" opacity=".9"/><rect x="51.1" y="0" width="25.8" height="256" fill="#f6e9d8"/><rect x="59.8" y="0" width="1" height="256" fill="#d9c5aa" opacity="0.28"/><rect x="66.8" y="0" width="1" height="256" fill="#d9c5aa" opacity="0.24"/><rect x="49.5" y="0" width="2" height="256" fill="#d6c1a4" opacity=".85"/><rect x="51.4" y="0" width="1.2" height="256" fill="#fdf7ee" opacity=".9"/><rect x="76.4" y="0" width="25.8" height="256" fill="#f3e3cf"/><rect x="85.2" y="0" width="1" height="256" fill="#d9c5aa" opacity="0.28"/><rect x="92.0" y="0" width="1" height="256" fill="#d9c5aa" opacity="0.24"/><rect x="74.8" y="0" width="2" height="256" fill="#d6c1a4" opacity=".85"/><rect x="76.7" y="0" width="1.2" height="256" fill="#fdf7ee" opacity=".9"/><rect x="101.7" y="0" width="25.8" height="256" fill="#f9eee0"/><rect x="109.4" y="0" width="1" height="256" fill="#d9c5aa" opacity="0.28"/><rect x="118.9" y="0" width="1" height="256" fill="#d9c5aa" opacity="0.24"/><rect x="100.1" y="0" width="2" height="256" fill="#d6c1a4" opacity=".85"/><rect x="102.0" y="0" width="1.2" height="256" fill="#fdf7ee" opacity=".9"/><rect x="127.0" y="0" width="25.8" height="256" fill="#f7eadb"/><rect x="134.4" y="0" width="1" height="256" fill="#d9c5aa" opacity="0.28"/><rect x="143.8" y="0" width="1" height="256" fill="#d9c5aa" opacity="0.24"/><rect x="125.4" y="0" width="2" height="256" fill="#d6c1a4" opacity=".85"/><rect x="127.3" y="0" width="1.2" height="256" fill="#fdf7ee" opacity=".9"/><rect x="152.3" y="0" width="25.8" height="256" fill="#f3e4d0"/><rect x="160.9" y="0" width="1" height="256" fill="#d9c5aa" opacity="0.28"/><rect x="169.5" y="0" width="1" height="256" fill="#d9c5aa" opacity="0.24"/><rect x="150.7" y="0" width="2" height="256" fill="#d6c1a4" opacity=".85"/><rect x="152.6" y="0" width="1.2" height="256" fill="#fdf7ee" opacity=".9"/><rect x="177.6" y="0" width="25.8" height="256" fill="#f8ecdd"/><rect x="186.3" y="0" width="1" height="256" fill="#d9c5aa" opacity="0.28"/><rect x="195.1" y="0" width="1" height="256" fill="#d9c5aa" opacity="0.24"/><rect x="176.0" y="0" width="2" height="256" fill="#d6c1a4" opacity=".85"/><rect x="177.9" y="0" width="1.2" height="256" fill="#fdf7ee" opacity=".9"/><rect x="202.9" y="0" width="25.8" height="256" fill="#f4e5d2"/><rect x="210.2" y="0" width="1" height="256" fill="#d9c5aa" opacity="0.28"/><rect x="220.1" y="0" width="1" height="256" fill="#d9c5aa" opacity="0.24"/><rect x="201.3" y="0" width="2" height="256" fill="#d6c1a4" opacity=".85"/><rect x="203.2" y="0" width="1.2" height="256" fill="#fdf7ee" opacity=".9"/><rect x="228.2" y="0" width="25.8" height="256" fill="#f1e0cb"/><rect x="235.8" y="0" width="1" height="256" fill="#d9c5aa" opacity="0.28"/><rect x="244.0" y="0" width="1" height="256" fill="#d9c5aa" opacity="0.24"/><rect x="226.6" y="0" width="2" height="256" fill="#d6c1a4" opacity=".85"/><rect x="228.5" y="0" width="1.2" height="256" fill="#fdf7ee" opacity=".9"/><!--/LW--></g></svg>
      <svg class="th" style="left:305px;top:313px" viewBox="0 0 256 256"><g filter="url(#fGrainS)"><!--SW--><rect width="256" height="256" fill="#eed7b3"/><rect x="0.0" y="-134" width="14.6" height="192" fill="#eed7b3"/><rect x="0.0" y="58" width="14.6" height="199" fill="#edd6b1"/><rect x="14.2" y="-23" width="14.6" height="207" fill="#ecd4af"/><rect x="14.2" y="184" width="14.6" height="174" fill="#ebd2ab"/><rect x="28.4" y="-31" width="14.6" height="194" fill="#f0dcbc"/><rect x="28.4" y="163" width="14.6" height="166" fill="#efd9b6"/><rect x="42.6" y="-87" width="14.6" height="221" fill="#f0dbba"/><rect x="42.6" y="134" width="14.6" height="209" fill="#edd6b1"/><rect x="56.8" y="-130" width="14.6" height="193" fill="#efd9b6"/><rect x="56.8" y="63" width="14.6" height="187" fill="#f0dcbc"/><rect x="56.8" y="250" width="14.6" height="163" fill="#f0dcbc"/><rect x="71.0" y="-77" width="14.6" height="197" fill="#ecd4ae"/><rect x="71.0" y="120" width="14.6" height="135" fill="#ecd4af"/><rect x="71.0" y="255" width="14.6" height="173" fill="#f0dbba"/><rect x="85.2" y="-63" width="14.6" height="139" fill="#f0dcbc"/><rect x="85.2" y="76" width="14.6" height="173" fill="#eed7b3"/><rect x="85.2" y="249" width="14.6" height="205" fill="#ecd4ae"/><rect x="99.4" y="-70" width="14.6" height="163" fill="#ebd2ab"/><rect x="99.4" y="93" width="14.6" height="196" fill="#f0dcbc"/><rect x="113.6" y="-34" width="14.6" height="128" fill="#ecd4ae"/><rect x="113.6" y="94" width="14.6" height="154" fill="#f0dcbc"/><rect x="113.6" y="248" width="14.6" height="209" fill="#ecd4ae"/><rect x="127.8" y="-135" width="14.6" height="213" fill="#efd9b6"/><rect x="127.8" y="78" width="14.6" height="202" fill="#edd7b2"/><rect x="142.0" y="-36" width="14.6" height="156" fill="#eed8b4"/><rect x="142.0" y="120" width="14.6" height="205" fill="#ebd2ab"/><rect x="156.2" y="-145" width="14.6" height="179" fill="#ebd2ab"/><rect x="156.2" y="34" width="14.6" height="141" fill="#edd7b2"/><rect x="156.2" y="175" width="14.6" height="134" fill="#f0dcbc"/><rect x="170.4" y="-135" width="14.6" height="147" fill="#efd9b6"/><rect x="170.4" y="12" width="14.6" height="136" fill="#edd6b1"/><rect x="170.4" y="148" width="14.6" height="170" fill="#eed8b4"/><rect x="184.6" y="-23" width="14.6" height="130" fill="#f0dbba"/><rect x="184.6" y="107" width="14.6" height="177" fill="#eed8b4"/><rect x="198.8" y="-10" width="14.6" height="155" fill="#f0dbba"/><rect x="198.8" y="145" width="14.6" height="224" fill="#eed8b4"/><rect x="213.0" y="-10" width="14.6" height="155" fill="#eed8b4"/><rect x="213.0" y="145" width="14.6" height="165" fill="#eed8b4"/><rect x="227.2" y="-91" width="14.6" height="139" fill="#ecd4ae"/><rect x="227.2" y="48" width="14.6" height="142" fill="#f0dbba"/><rect x="227.2" y="190" width="14.6" height="149" fill="#edd6b1"/><rect x="241.4" y="-147" width="14.6" height="182" fill="#edd7b2"/><rect x="241.4" y="35" width="14.6" height="143" fill="#efd9b6"/><rect x="241.4" y="178" width="14.6" height="156" fill="#eed7b3"/><rect x="255.6" y="-113" width="14.6" height="173" fill="#ecd4af"/><rect x="255.6" y="60" width="14.6" height="167" fill="#edd7b2"/><rect x="255.6" y="227" width="14.6" height="192" fill="#ebd2ab"/><!--/SW--></g></svg>

      <div class="lbl" style="left:23px;top:279px;letter-spacing:.23px">Dark Cloth</div>
      <div class="lbl" style="left:305px;top:279px;letter-spacing:.5px">Dark Wood</div>
      <div class="lbl" style="left:587px;top:279px;letter-spacing:.14px">Grey Wash Wall</div>
      <div class="abs" style="left:119px;top:571px;width:66px;height:13px;border:1px solid #b7d3ee;border-radius:2px;background:linear-gradient(180deg,#fbfdff,#edf4fc)"></div>
      <div class="lbl" style="left:23px;top:571px;letter-spacing:.49px">Light Wood</div>
      <div class="lbl" style="left:305px;top:571px;letter-spacing:.42px">Subtle Wood</div>
    </div>

    <div class="t" style="left:11px;top:700px;letter-spacing:.28px">Die integrierten Texturen stammen von <span style="color:#0000ee;text-decoration:underline">subtlepatterns.com</span>.</div>

    <!-- buttons: client coords = page - (99,91) -->
    <div class="dbtn" style="left:572px;width:80px;border-color:#4a90d2;box-shadow:inset 0 0 0 1px #b5dcf8, inset 0 0 0 2px rgba(255,255,255,.55);background:linear-gradient(180deg,#f5f8fb,#edf2f8 48%,#e2ebf5 52%,#dee9f4)">
      <svg class="abs" style="left:24px;top:5px" width="14" height="12" viewBox="0 0 14 12"><path d="M.8 6.400l2-1.900 2.400 2.600L11.500.6l1.900 1.500L5.400 11.300z" fill="#57b332" stroke="#3e9422" stroke-width=".6"/></svg>
      <span style="left:41px;letter-spacing:-.7px">OK</span>
    </div>
    <div class="dbtn" style="left:658px;width:122px">
      <svg class="abs" style="left:4px;top:3px" width="16" height="16" viewBox="0 0 16 16"><path d="M5.600 1h4.800v4.600H15v4.800h-4.600V15H5.600v-4.600H1V5.600h4.600z" fill="#3fa81f" stroke="#2b7f12" stroke-width=".9" stroke-linejoin="round"/><path d="M6.500 2h3v4.500H14v1.300H2V6.500h4.500z" fill="#8ad96d" opacity=".7"/></svg>
      <span style="left:21px;letter-spacing:.43px">Textur hinzufügen</span>
    </div>
    <div class="dbtn" style="left:786px;width:113px;border-color:#c9c9c9;background:#f3f3f3">
      <svg class="abs" style="left:4px;top:8px" width="16" height="6" viewBox="0 0 16 6"><rect x=".5" y=".5" width="15" height="5" rx="2.500" fill="#a0a0a0" stroke="#8a8a8a"/></svg>
      <span style="left:21px;color:#8c8c8c;letter-spacing:.35px">Textur entfernen</span>
    </div>
    <div class="dbtn" style="left:905px;width:84px">
      <svg class="abs" style="left:4px;top:3px" width="16" height="16" viewBox="0 0 16 16"><defs><radialGradient id="gX" cx=".4" cy=".3" r=".8"><stop offset="0" stop-color="#e8464a"/><stop offset="1" stop-color="#a80d16"/></radialGradient></defs><circle cx="8" cy="8" r="7.600" fill="url(#gX)"/><path d="M4.800 4.800l6.400 6.400M11.200 4.800l-6.400 6.400" stroke="#fff" stroke-width="2.100" stroke-linecap="round"/></svg>
      <span style="left:21px;letter-spacing:.29px">Abbrechen</span>
    </div>
  </div>
</div>

</body>
</html>
